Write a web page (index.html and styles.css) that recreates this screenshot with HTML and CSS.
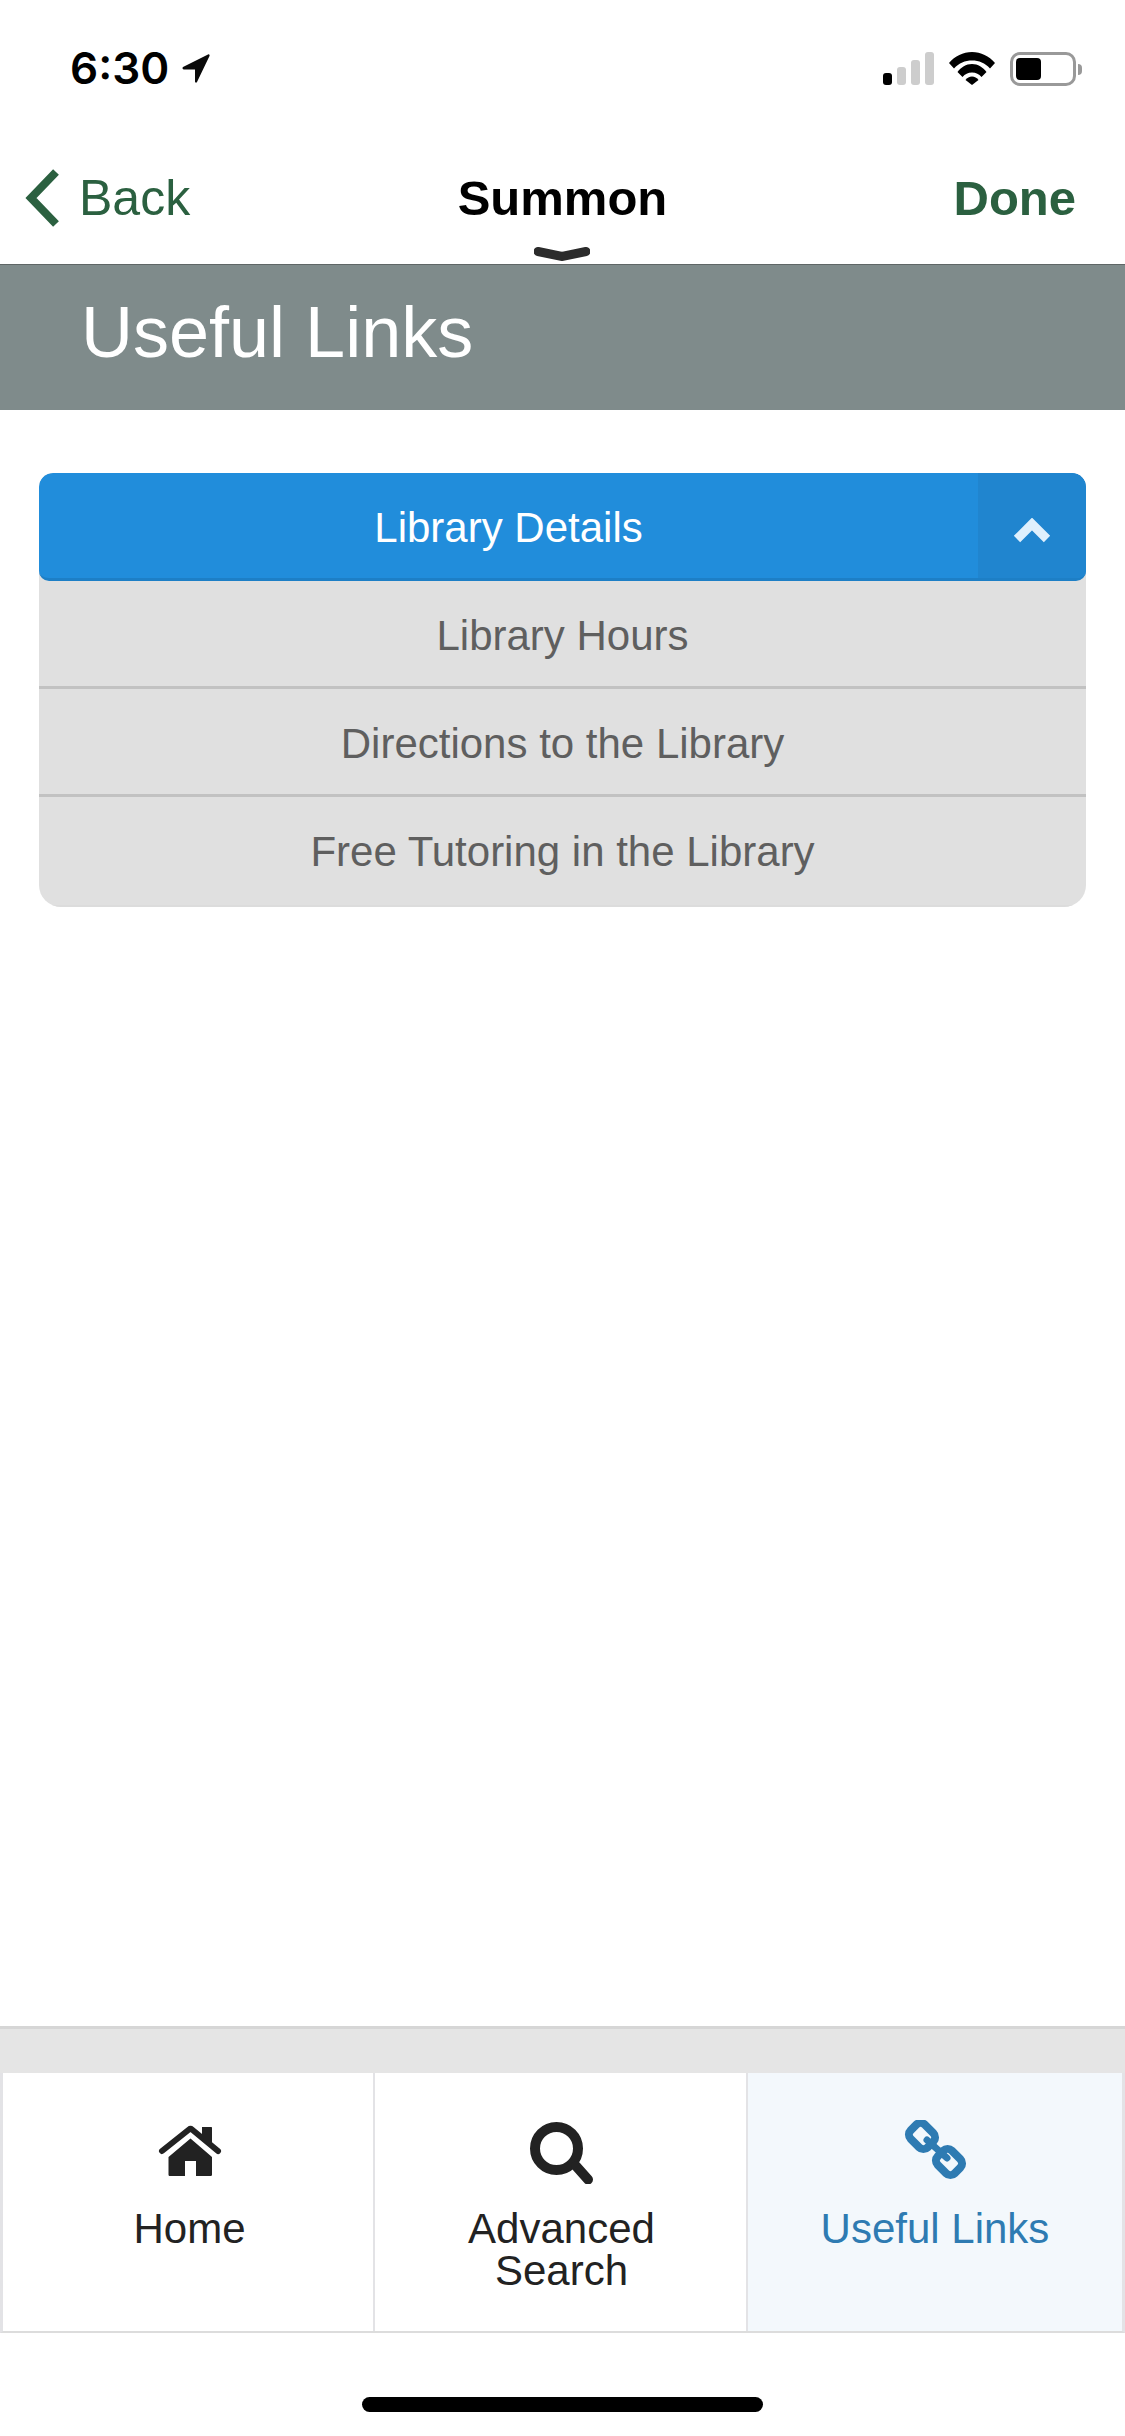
FILE: index.html
```html
<!DOCTYPE html>
<html lang="en">
<head>
    <meta charset="UTF-8">
    <meta name="viewport" content="width=device-width, initial-scale=1.0">
    <title>Useful Links</title>
    <link rel="stylesheet" href="styles.css">
</head>
<body>
    <div class="page">
        <div class="status-bar">
            <div class="status-left">
                <span class="time">6:30</span>
                <svg class="arrow-icon" viewBox="0 0 30 30"><path d="M2 14 27 1.500c1-.5 2 .5 1.500 1.500L16 29c-.5 1-2 .8-2-.4V16.500H3c-1.500 0-2-1.700-1-2.500z"/></svg>
            </div>
            <div class="status-right">
                <div class="signal">
                    <span class="bar bar-on"></span>
                    <span class="bar bar-2"></span>
                    <span class="bar bar-3"></span>
                    <span class="bar bar-4"></span>
                </div>
                <svg class="wifi-icon" viewBox="0 0 46 33"><path d="M0 11C6 4 14 0 23 0s17 4 23 11l-5 5.500C36 11 30 8.500 23 8.500S10 11 5 16.500z"/><path d="M8.500 20C12 15.500 17 12 23 12s11 3.500 14.500 8l-5 5C30 22 27 20.500 23 20.500S16 22 13.500 25z"/><path d="M16.500 28c1.500-2 4-3.500 6.500-3.500s5 1.500 6.500 3.500L23 33z"/></svg>
                <div class="battery">
                    <div class="battery-body"><span class="battery-level"></span></div>
                    <span class="battery-tip"></span>
                </div>
            </div>
        </div>

        <div class="nav">
            <div class="nav-back">
                <svg class="back-icon" viewBox="0 0 36 60"><path d="M32 4 7 30l25 26"/></svg>
                <span>Back</span>
            </div>
            <div class="nav-title">Summon</div>
            <div class="nav-done">Done</div>
            <svg class="nav-handle" viewBox="0 0 56 14"><path d="M4 4.500 28 9.500 52 4.500"/></svg>
        </div>

        <div class="page-header">Useful Links</div>

        <div class="content">
            <div class="accordion">
                <div class="accordion-head">
                    <div class="accordion-title">Library Details</div>
                    <div class="accordion-toggle">
                        <svg class="toggle-icon" viewBox="0 0 38 25"><path d="M4 21 19 6l15 15"/></svg>
                    </div>
                </div>
                <div class="accordion-item">Library Hours</div>
                <div class="accordion-item">Directions to the Library</div>
                <div class="accordion-item">Free Tutoring in the Library</div>
            </div>
        </div>

        <div class="tab-gap"></div>
        <div class="tabs">
            <div class="tab">
                <svg class="tab-icon" viewBox="0 0 64 64"><path class="home-fill" d="M10.500 37 32.500 18.500 54 37v17.500c0 1-.7 1.500-1.500 1.500H38V41H27v15H12c-.8 0-1.500-.5-1.500-1.500z"/><path class="home-roof" d="M4 31 31 9.500c1-.8 2-.8 3 0L60 31"/><path class="home-fill" d="M44 7h9c.6 0 1 .4 1 1v19L44 18z"/></svg>
                <div class="tab-label">Home</div>
            </div>
            <div class="tab">
                <svg class="tab-icon" viewBox="0 0 64 64"><circle class="search-ring" cx="26.500" cy="28.500" r="21.500"/><path class="search-handle" d="M46 46 58 59.500"/></svg>
                <div class="tab-label">Advanced<br>Search</div>
            </div>
            <div class="tab tab-active">
                <svg class="tab-icon" viewBox="0 0 64 64"><g class="link-shape"><rect x="-10" y="-12" width="20" height="24" rx="6" transform="translate(19 16) rotate(-45)"/><rect x="-10" y="-12" width="20" height="24" rx="6" transform="translate(46 42) rotate(-45)"/><path d="M24 20 44 38"/></g></svg>
                <div class="tab-label">Useful Links</div>
            </div>
        </div>

        <div class="home-area"><span class="home-bar"></span></div>
    </div>
</body>
</html>
```

FILE: styles.css
```css
* {
    box-sizing: border-box;
}
body {
    margin: 0;
    font-family: "Liberation Sans", Arial, sans-serif;
    background: #fff;
}
.page {
    width: 1125px;
    height: 2436px;
    display: flex;
    flex-direction: column;
    overflow: hidden;
}

/* status bar */
.status-bar {
    height: 132px;
    display: flex;
    justify-content: space-between;
    padding: 44px 43px 0 70px;
}
.status-left {
    display: flex;
    align-items: flex-start;
    gap: 12px;
}
.time {
    font-family: Inter, "Liberation Sans", sans-serif;
    font-size: 44px;
    font-weight: 600;
    line-height: 48px;
    color: #000;
}
.arrow-icon {
    width: 30px;
    height: 30px;
    margin-top: 9px;
    fill: #0a0a0a;
}
.status-right {
    display: flex;
    align-items: flex-start;
    gap: 15px;
    padding-top: 8px;
}
.signal {
    display: flex;
    align-items: flex-end;
    gap: 5px;
    height: 33px;
}
.bar {
    width: 9px;
    border-radius: 3px;
    background: #cdcdcd;
}
.bar-on {
    height: 12px;
    background: #000;
}
.bar-2 {
    height: 18px;
}
.bar-3 {
    height: 25px;
}
.bar-4 {
    height: 33px;
}
.wifi-icon {
    width: 46px;
    height: 33px;
    fill: #000;
}
.battery {
    display: flex;
    align-items: center;
    gap: 2px;
}
.battery-body {
    width: 66px;
    height: 34px;
    padding: 3px;
    border: 3px solid #999;
    border-radius: 10px;
    display: flex;
}
.battery-level {
    width: 25px;
    background: #000;
    border-radius: 4px;
}
.battery-tip {
    width: 4px;
    height: 11px;
    background: #999;
    border-radius: 0 4px 4px 0;
}

/* nav */
.nav {
    position: relative;
    height: 133px;
    border-bottom: 1px solid #5f6666;
    display: flex;
    align-items: flex-start;
    justify-content: space-between;
    padding: 26px 49px 0 24px;
    font-size: 50px;
    line-height: 58px;
}
.nav-back {
    display: flex;
    align-items: flex-start;
    gap: 19px;
    color: #2b6040;
    width: 325px;
}
.back-icon {
    width: 36px;
    height: 60px;
    margin-top: 10px;
    fill: none;
    stroke: #2b6040;
    stroke-width: 8;
}
.nav-back span {
    margin-top: 11px;
}
.nav-title {
    font-size: 49px;
    font-weight: bold;
    color: #000;
    margin-top: 11px;
}
.nav-done {
    width: 300px;
    text-align: right;
    font-size: 49px;
    font-weight: bold;
    color: #2b6040;
    margin-top: 11px;
}
.nav-handle {
    position: absolute;
    left: 534px;
    bottom: 3px;
    width: 56px;
    height: 14px;
    fill: none;
    stroke: #2b2b2b;
    stroke-width: 9;
    stroke-linecap: round;
}

/* grey title */
.page-header {
    height: 145px;
    background: #7f8b8b;
    color: #fff;
    font-size: 72px;
    line-height: 134px;
    padding-left: 81px;
}

/* accordion */
.content {
    flex: 1;
    padding: 63px 39px 0;
}
.accordion {
    background: #e0e0e0;
    border-radius: 14px 14px 22px 22px;
    overflow: hidden;
}
.accordion-head {
    display: flex;
    height: 108px;
    background: #218ddb;
    border-bottom: 3px solid #1d7fc6;
    border-radius: 14px 14px 10px 10px;
    overflow: hidden;
    color: #fff;
    font-size: 42px;
}
.accordion-title {
    flex: 1;
    text-align: center;
    line-height: 110px;
}
.accordion-toggle {
    width: 108px;
    background: #2085cf;
    display: flex;
    justify-content: center;
    padding-top: 45px;
}
.toggle-icon {
    width: 38px;
    height: 25px;
    fill: none;
    stroke: #dff0fd;
    stroke-width: 9;
    stroke-linejoin: miter;
}
.accordion-item {
    height: 108px;
    padding-top: 2px;
    text-align: center;
    font-size: 42px;
    line-height: 106px;
    color: #5f5f5f;
    border-bottom: 3px solid #c2c2c2;
}
.accordion-item:last-child {
    height: 110px;
    border-bottom: 2px solid #dcdcdc;
}

/* bottom tabs */
.tab-gap {
    height: 47px;
    background: #e5e5e5;
    border-top: 3px solid #d6d6d6;
}
.tabs {
    display: grid;
    grid-template-columns: 372px 373px 374px;
    height: 260px;
    background: #e3e3e6;
    border-bottom: 2px solid #dcdcdc;
    border-left: 3px solid #e3e3e6;
    border-right: 3px solid #e3e3e6;
}
.tab {
    background: #fff;
    margin-right: 2px;
    display: flex;
    flex-direction: column;
    align-items: center;
    padding-top: 47px;
    padding-left: 2px;
    color: #222;
    font-size: 42px;
    line-height: 42px;
    text-align: center;
}
.tab:first-child {
    padding-left: 3px;
}
.tab:last-child {
    margin-right: 0;
    padding-left: 0;
}
.tab-active {
    background: #f3f8fc;
    color: #2e7bb2;
}
.tab-icon {
    width: 64px;
    height: 64px;
}
.tab-label {
    margin-top: 24px;
}
.home-fill {
    fill: #222;
}
.home-roof {
    fill: none;
    stroke: #222;
    stroke-width: 6;
    stroke-linecap: round;
}
.search-ring {
    fill: none;
    stroke: #222;
    stroke-width: 10;
}
.search-handle {
    fill: none;
    stroke: #222;
    stroke-width: 10;
    stroke-linecap: round;
}
.link-shape rect {
    fill: none;
    stroke: #2e7bb2;
    stroke-width: 8;
}
.link-shape path {
    fill: none;
    stroke: #2e7bb2;
    stroke-width: 7;
    stroke-linecap: round;
}

/* home indicator */
.home-area {
    height: 103px;
    display: flex;
    justify-content: center;
    padding-top: 64px;
}
.home-bar {
    width: 401px;
    height: 15px;
    background: #000;
    border-radius: 8px;
}
```
